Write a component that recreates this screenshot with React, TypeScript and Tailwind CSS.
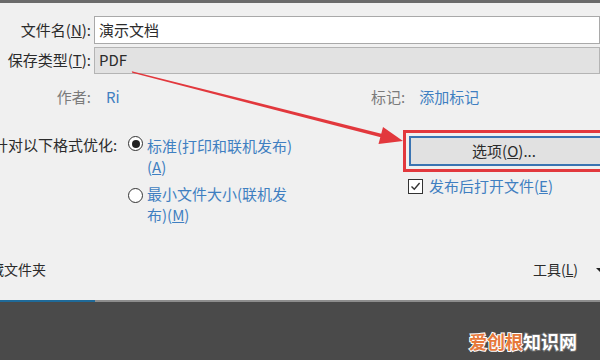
import { FC } from "react";

const font = "font-['Segoe_UI','Noto_Sans_CJK_SC','Noto_Sans',sans-serif]";

const Radio: FC<{ checked?: boolean }> = ({ checked }) => (
  <span className="mt-[1px] flex h-[15px] w-[15px] shrink-0 items-center justify-center rounded-full border border-[#333] bg-white">
    {checked && <span className="h-[8px] w-[8px] rounded-full bg-[#222]" />}
  </span>
);

const Arrow: FC = () => (
  <svg
    className="pointer-events-none absolute left-0 top-0"
    width="600"
    height="360"
    viewBox="0 0 600 360"
  >
    <polygon
      points="131.8,71.3 132.2,72.7 383.6,138.1 382.4,133.9"
      fill="#e2383d"
    />
    <polygon points="403,141 378.5,144 383,127" fill="#e2383d" />
  </svg>
);

const App: FC = () => {
  return (
    <div
      className={`relative flex h-[360px] w-[600px] flex-col overflow-hidden bg-[#f0f0f0] text-[15px] text-[#2b2b2b] ${font}`}
    >
      <div className="h-[3px] shrink-0 bg-[#6b6b6b]" />

      {/* file name */}
      <div className="mt-[13px] flex h-[28px] items-center">
        <span className="w-[94px] pr-[3px] text-right">
          文件名(<u>N</u>):
        </span>
        <div className="flex h-full flex-1 items-center border border-[#a9a9a9] bg-white pl-[4px]">
          演示文档
        </div>
      </div>

      {/* save type */}
      <div className="mt-[3px] flex h-[27px] items-center">
        <span className="w-[94px] pr-[3px] text-right">
          保存类型(<u>T</u>):
        </span>
        <div className="flex h-full flex-1 items-center border border-[#b4b4b4] bg-[#e2e2e2] pl-[4px]">
          PDF
        </div>
      </div>

      {/* author / tags */}
      <div className="mt-[13px] flex h-[20px] items-center">
        <span className="w-[91px] text-right text-[#7b7b7b]">作者:</span>
        <span className="ml-[15px] w-[265px] text-[#3f7fc1]">Ri</span>
        <span className="text-[#7b7b7b]">标记:</span>
        <span className="ml-[14px] text-[#3f7fc1]">添加标记</span>
      </div>

      {/* optimize */}
      <div className="mt-[23px] flex">
        <div className="ml-[-7px] flex w-[135px] shrink-0 pt-[5px]">
          <span className="leading-[20px]">针对以下格式优化:</span>
        </div>
        <div className="flex w-[275px] shrink-0 flex-col gap-[6px] pt-[5px] leading-[21px] text-[#3f7fc1]">
          <div className="flex items-start gap-[4px]">
            <Radio checked />
            <div>
              标准(打印和联机发布)
              <br />
              (<u>A</u>)
            </div>
          </div>
          <div className="flex items-start gap-[4px]">
            <span className="pt-[4px]">
              <Radio />
            </span>
            <div>
              最小文件大小(联机发
              <br />
              布)(<u>M</u>)
            </div>
          </div>
        </div>
        <div className="flex w-[220px] shrink-0 flex-col">
          <div className="border-[3px] border-[#e2383d] p-[3px]">
            <div className="flex h-[30px] items-center justify-center border-2 border-[#3a74b2] bg-[#e1e1e1] pr-[18px]">
              选项(<u>O</u>)...
            </div>
          </div>
          <div className="mt-[3px] flex items-center gap-[6px] pl-[5px]">
            <span className="flex h-[15px] w-[15px] items-center justify-center border border-[#333] bg-white">
              <svg width="11" height="11" viewBox="0 0 11 11">
                <path
                  d="M1.5 5.5 L4.3 8.3 L9.6 2"
                  fill="none"
                  stroke="#333"
                  strokeWidth="1.4"
                />
              </svg>
            </span>
            <span className="text-[#3f7fc1]">
              发布后打开文件(<u>E</u>)
            </span>
          </div>
        </div>
      </div>

      <div className="flex-1" />

      {/* bottom bar */}
      <div className="mb-[20px] flex items-center">
        <span className="ml-[-10px] text-[14px]">藏文件夹</span>
        <div className="flex-1" />
        <span className="mr-[18px] text-[14px]">
          工具(<u>L</u>)
        </span>
        <span className="mr-[-4px] h-0 w-0 border-x-[4px] border-t-[4px] border-x-transparent border-t-[#222]" />
      </div>

      {/* dark strip */}
      <div className="flex h-[60px] shrink-0 flex-col bg-[#4a4a4a]">
        <div className="flex h-[2px]">
          <div className="w-[95px] bg-[#1f6a99]" />
          <div className="flex-1 bg-[#8d8d8d]" />
        </div>
        <div className="flex flex-1 items-end justify-end pb-[9px] pr-[23px]">
          <span className="text-[18px] font-bold leading-[20px] [paint-order:stroke_fill]">
            <span className="text-[#e6783a] [-webkit-text-stroke:2px_#ffffff]">爱创根</span>
            <span className="text-[#ffffff] [-webkit-text-stroke:2px_#6f6f6f]">知识网</span>
          </span>
        </div>
      </div>

      <Arrow />
    </div>
  );
};

export default App;
